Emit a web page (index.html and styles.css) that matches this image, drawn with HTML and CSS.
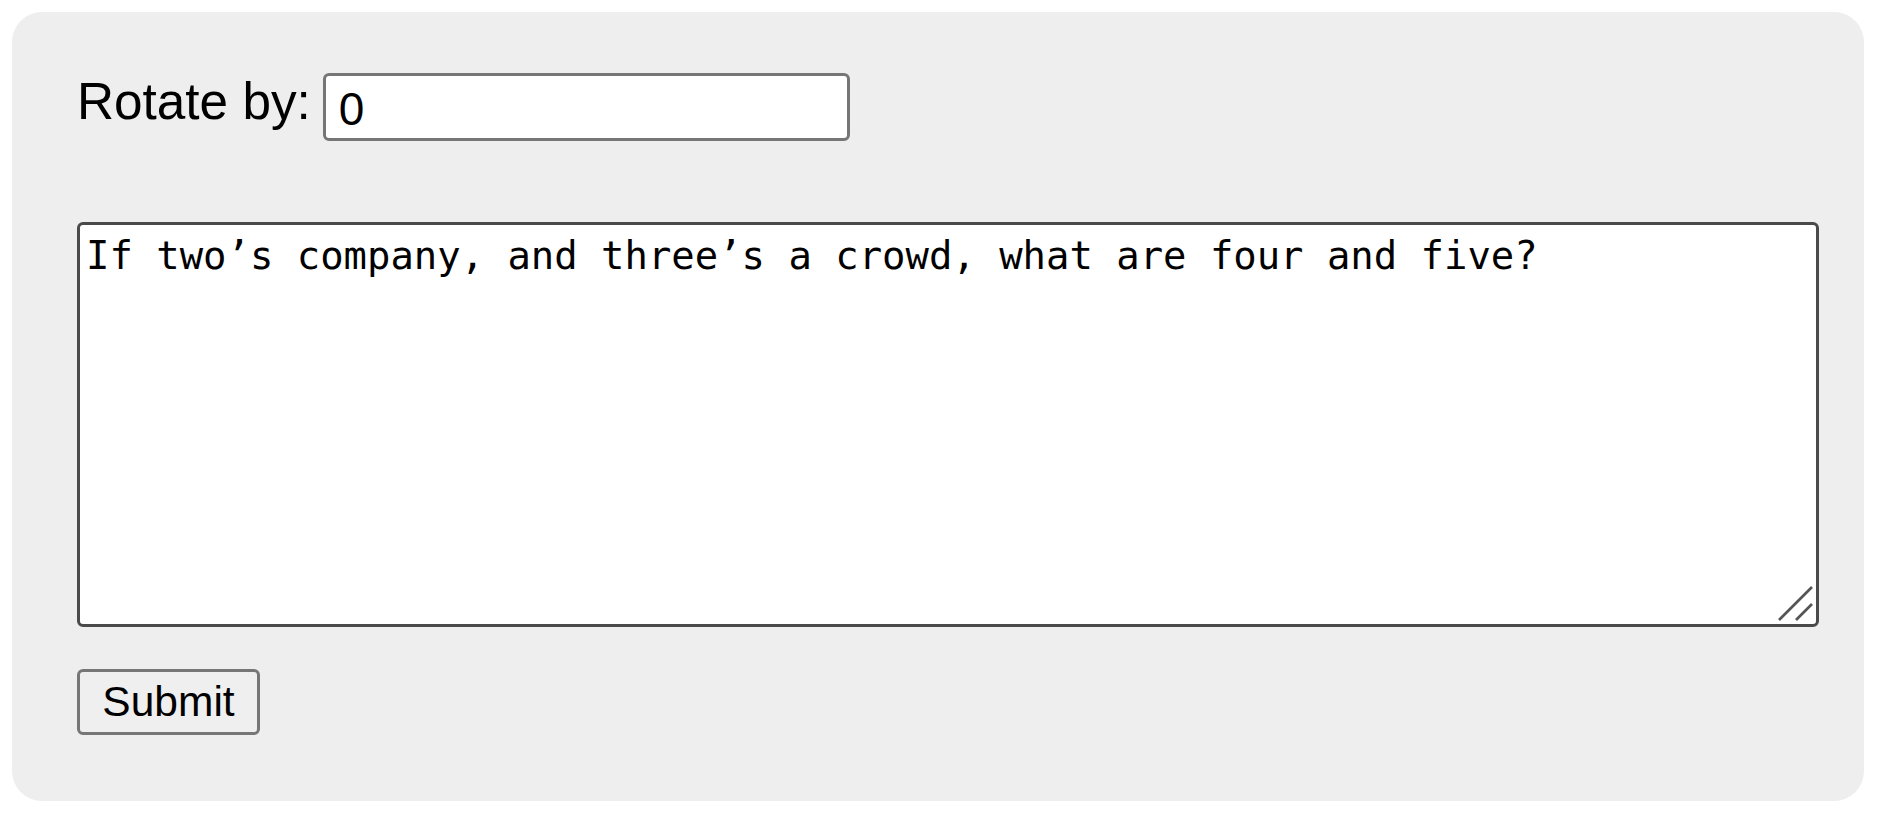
FILE: index.html
```html
<!DOCTYPE html>
<html lang="en">
<head>
<meta charset="utf-8">
<title>Rotate</title>
<link rel="stylesheet" href="styles.css">
</head>
<body>
<form class="panel">
  <div class="row">
    <label class="label" for="rot">Rotate by:</label>
    <input class="num" id="rot" type="text" value="0">
  </div>
  <div class="ta-wrap">
    <textarea class="text">If two’s company, and three’s a crowd, what are four and five?</textarea>
    <svg class="grip" width="40" height="40" viewBox="0 0 40 40" aria-hidden="true">
      <line x1="4" y1="37" x2="37" y2="4" />
      <line x1="21" y1="37" x2="37" y2="21" />
    </svg>
  </div>
  <div class="actions">
    <button class="btn" type="button">Submit</button>
  </div>
</form>
</body>
</html>
```
FILE: styles.css
```css
html, body {
  margin: 0;
  padding: 0;
  background: #ffffff;
}
body {
  padding: 12px;
  font-family: "Liberation Sans", Arial, sans-serif;
  color: #000;
}
.panel {
  box-sizing: border-box;
  width: 1852px;
  height: 789px;
  background: #eeeeee;
  border-radius: 30px;
  padding: 61px 0 0 65px;
  display: flex;
  flex-direction: column;
}
.row {
  display: flex;
  align-items: flex-start;
  gap: 12px;
  height: 68px;
}
.label {
  font-size: 51.3px;
  line-height: 58px;
}
.num {
  box-sizing: border-box;
  width: 527px;
  height: 68px;
  margin: 0;
  border: 3px solid #767676;
  border-radius: 6px;
  background: #fff;
  padding: 3px 13px 0;
  font-family: "Liberation Sans", Arial, sans-serif;
  font-size: 46px;
  color: #000;
  outline: none;
}
.ta-wrap {
  position: relative;
  width: 1742px;
  height: 405px;
  margin-top: 81px;
}
.text {
  box-sizing: border-box;
  display: block;
  width: 100%;
  height: 100%;
  margin: 0;
  border: 3px solid #4a4a4a;
  border-radius: 6px;
  background: #fff;
  padding: 8px 6px;
  font-family: "DejaVu Sans Mono", monospace;
  font-size: 38.9px;
  line-height: 1.2;
  color: #000;
  resize: none;
  outline: none;
}
.grip {
  position: absolute;
  right: 4px;
  bottom: 4px;
  stroke: #555555;
  stroke-width: 2.6;
  pointer-events: none;
}
.actions {
  margin-top: 42px;
}
.btn {
  box-sizing: border-box;
  width: 183px;
  height: 66px;
  margin: 0;
  padding: 0;
  border: 3px solid #767676;
  border-radius: 6px;
  background: #efefef;
  font-family: "Liberation Sans", Arial, sans-serif;
  font-size: 42.5px;
  color: #000;
}
```
